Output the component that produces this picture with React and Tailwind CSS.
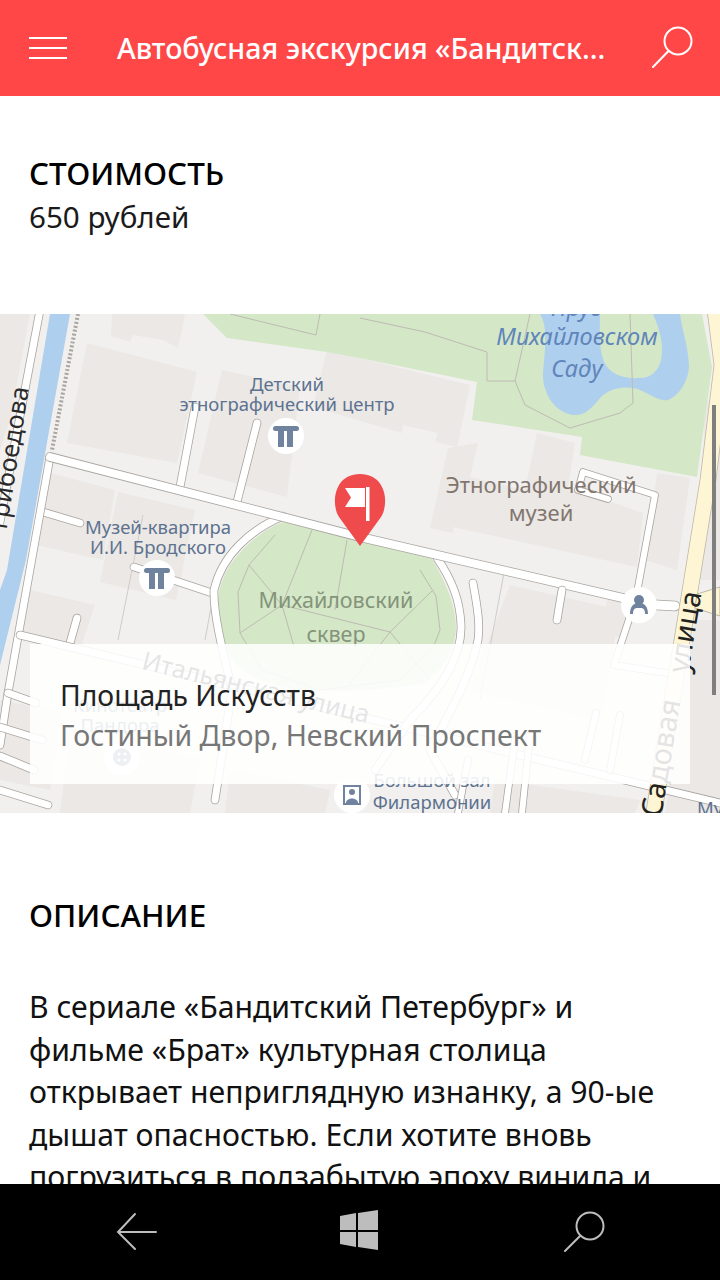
import React from "react";

const FONT = { fontFamily: '"Noto Sans", "Open Sans", sans-serif' };

// casing + white fill, same look as the map tiles
function Road({ d, w = 7, fill = "#ffffff", casing = "#aaa5a0", cap = "round" }) {
  return (
    <g fill="none" strokeLinejoin="round" strokeLinecap={cap}>
      <path d={d} stroke={casing} strokeWidth={w + 1.6} />
      <path d={d} stroke={fill} strokeWidth={w} />
    </g>
  );
}

const BUILDINGS = [
  "87,343 197,372 177,463 67,443",
  "112,314 185,314 178,348 163,340 133,335 130,342 111,336",
  "222,370 300,387 287,497 198,473",
  "327,350 470,385 457,447 435,442 438,433 403,425 402,433 313,407",
  "537,433 575,443 568,487 643,513 637,567 453,527 453,533 430,528 448,448 478,443 470,477 525,490",
  "657,473 690,478 677,570 645,560",
  "50,473 115,490 103,560 36,545",
  "118,492 195,510 176,600 100,582",
  "30,590 95,605 80,650 22,632",
  "0,314 30,314 10,420 0,450",
  "510,585 620,610 600,720 470,690",
  "610,590 640,600 625,640 600,630",
  "0,700 60,712 50,790 0,780",
  "70,730 200,760 190,813 60,813",
  "230,770 330,790 325,813 225,813",
  "495,780 640,800 635,813 490,813",
  "695,620 720,620 720,813 665,813",
  "705,400 720,405 720,580 700,580",
];

function MapIconCircle({ cx, cy, children }) {
  return (
    <g>
      <circle cx={cx} cy={cy} r="18" fill="#ffffff" />
      {children}
    </g>
  );
}

function Column({ cx, cy }) {
  return (
    <g fill="#6f829e">
      <rect x={cx - 13} y={cy - 10} width="26" height="5" rx="2.5" />
      <rect x={cx - 8} y={cy - 6} width="6" height="17" />
      <rect x={cx + 1} y={cy - 6} width="6" height="17" />
    </g>
  );
}

function MapDrawing() {
  const label = { fontFamily: '"Noto Sans", sans-serif' };
  return (
    <svg viewBox="0 314 720 499" className="block h-[499px] w-[720px]">
      <rect x="0" y="314" width="720" height="499" fill="#f1f0ee" />
      {BUILDINGS.map((p) => (
        <polygon key={p} points={p} fill="#ebe8e5" />
      ))}

      {/* parks and water */}
      <polygon
        points="203,314 227,338 327,352 360,358 477,382 472,420 582,437 580,455 697,477 712,367 702,314"
        fill="#d4e7c7"
      />
      <path
        d="M540,314 C550,330 543,360 543,377 C544,395 555,412 573,415 C585,416 592,408 600,398 C610,388 625,385 640,390 C652,395 660,402 668,400 C680,395 689,380 689,365 C688,345 682,330 680,314 L653,314 C660,330 664,345 661,360 C658,372 650,378 640,378 C625,379 610,375 604,362 C598,345 600,330 600,314 Z"
        fill="#afcfee"
      />
      <polygon points="50,314 70,314 26,560 0,665 0,590 7,570" fill="#afcfee" />
      <path
        d="M283,522 L360,541 L430,556 C445,580 456,605 456,628 C455,650 445,668 425,682 C400,690 340,692 300,690 C260,685 232,670 222,640 C214,615 215,590 230,565 C245,545 262,530 283,522 Z"
        fill="#d4e7c7"
      />

      {/* paths inside the parks */}
      <g fill="none" stroke="#bdbcb2" strokeWidth="1">
        <path d="M230,314 L316,335 L320,314" />
        <path d="M360,318 L425,332 L487,352 L487,381 L515,381 M530,314 L515,381 L525,405 L570,428 L620,413 L633,403 L630,314" />
        <path d="M275,535 L249,565 L238,592 L240,633 L262,670 L320,690 L400,680 L433,648 L440,630 L436,596 L420,570" />
        <path d="M249,565 L282,605 L240,633 M282,605 L312,530 M282,605 L295,650 M282,605 L390,632 L433,590 M390,632 L345,690 M347,540 L335,610 M390,632 L430,680" />
      </g>
      <g fill="none" stroke="#cfcdca" strokeWidth="1">
        <path d="M218,570 L205,640 M143,515 L118,640" />
        <path d="M504,573 L480,700" />
      </g>

      {/* rail along the canal */}
      <path d="M78,314 L52,450" stroke="#aaa5a0" strokeWidth="4" strokeDasharray="2 2" fill="none" />

      {/* streets */}
      <Road d="M40,310 L0,522" w={7} />
      <Road d="M195,407 L180,487" w={7} />
      <Road d="M257,423 L237,502" w={7} />
      <Road d="M43,512 L80,523" w={7} />
      <Road d="M134,567 L212,593" w={7} />
      <Road d="M77,618 L70,643" w={7} />
      <Road d="M50,457 L8,693 L0,745" w={7} />
      <Road d="M8,693 L36,703" w={7} />
      <Road d="M0,727 L42,740" w={7} />
      <Road d="M0,756 L34,770" w={7} />
      <Road d="M0,790 L48,805" w={7} />
      <Road d="M20,635 L720,803" w={7} />
      <Road d="M283,516 C250,530 222,555 214,590 C213,615 225,660 232,690 L215,800" w={7} />
      <Road d="M437,558 C452,580 460,600 461,625 C462,650 450,680 410,720 L375,770" w={7} />
      <Road d="M473,583 C478,610 480,625 478,640 C470,680 445,720 430,750 L455,795" w={7} />
      <Road d="M50,457 L360,537 L640,602" w={8} />
      <Road d="M562,590 L557,620" w={7} />
      <Road d="M583,472 L578,490 L608,499 M583,472 L655,495 L636,598 L614,665 L680,675" w={6} />
      <Road d="M596,713 L585,760 M620,715 L610,770 M515,740 L505,813 M468,760 L458,813 M530,735 L522,813" w={6} />
      <Road d="M640,604 L675,606" w={9} />
      <Road
        d="M715,310 L722,365 L708,480 L695,560 L682,640 L657,793 L653,818"
        w={15}
        fill="#fdf5d3"
        casing="#bdb8a8"
        cap="butt"
      />
      <polygon points="697,594 720,587 720,616 695,608" fill="#fdf5d3" stroke="#bdb8a8" strokeWidth="1" />

      {/* labels */}
      <g style={label} fill="#5d7290" fontSize="18.5" textAnchor="middle">
        <text x="287" y="391">Детский</text>
        <text x="287" y="411">этнографический центр</text>
        <text x="158" y="534">Музей-квартира</text>
        <text x="158" y="554">И.И. Бродского</text>
        <text x="120" y="712">Кинотеатр</text>
        <text x="120" y="732">Пандора</text>
        <text x="432" y="787">Большой зал</text>
        <text x="432" y="809">Филармонии</text>
        <text x="697" y="815" textAnchor="start">Му</text>
      </g>
      <g style={label} fill="#82766f" fontSize="22" textAnchor="middle">
        <text x="541" y="493">Этнографический</text>
        <text x="541" y="521">музей</text>
      </g>
      <g style={label} fill="#84947a" fontSize="21.5" textAnchor="middle">
        <text x="336" y="608">Михайловский</text>
        <text x="336" y="642">сквер</text>
      </g>
      <g style={label} fill="#5f85ba" fontSize="23.5" fontStyle="italic" textAnchor="middle">
        <text x="577" y="316">Пруд</text>
        <text x="577" y="345">Михайловском</text>
        <text x="577" y="377">Саду</text>
      </g>
      <text x="0" y="0" style={label} fill="#2a2a2a" fontSize="25" textAnchor="end" transform="translate(29,388) rotate(-81)">
        Грибоедова
      </text>
      <text x="0" y="0" style={label} fill="#2a2a2a" fontSize="25" textAnchor="middle" transform="translate(254,696) rotate(13.5)">
        Итальянская улица
      </text>
      <text x="0" y="0" style={label} fill="#222222" fontSize="29" transform="translate(661,818) rotate(-80.5)">
        Садовая
      </text>
      <text x="0" y="0" style={label} fill="#222222" fontSize="29" transform="translate(688,674) rotate(-80.5)">
        улица
      </text>

      {/* point of interest icons */}
      <MapIconCircle cx={286} cy={436}>
        <Column cx={286} cy={436} />
      </MapIconCircle>
      <MapIconCircle cx={157} cy={578}>
        <Column cx={157} cy={578} />
      </MapIconCircle>
      <MapIconCircle cx={639} cy={605}>
        <circle cx="639" cy="600" r="5" fill="#6f829e" />
        <path d="M630,614 C630,606 634,603 639,603 C644,603 648,606 648,614 L645,614 C645,610 644,609 642,608 L636,608 C634,609 633,610 633,614 Z" fill="#6f829e" />
      </MapIconCircle>
      <MapIconCircle cx={122} cy={757}>
        <circle cx="122" cy="757" r="9" fill="#6f829e" />
        <circle cx="119" cy="754" r="1.5" fill="#fff" />
        <circle cx="125" cy="754" r="1.5" fill="#fff" />
        <circle cx="119" cy="760" r="1.5" fill="#fff" />
        <circle cx="125" cy="760" r="1.5" fill="#fff" />
      </MapIconCircle>
      <MapIconCircle cx={352} cy={795}>
        <rect x="344" y="786" width="16" height="18" fill="none" stroke="#6f829e" strokeWidth="2" />
        <circle cx="352" cy="792" r="3" fill="#6f829e" />
        <path d="M346,803 C346,797 358,797 358,803 Z" fill="#6f829e" />
      </MapIconCircle>

      {/* pin */}
      <path
        d="M360,546 L339,517 C331,505 333,474 360,474 C387,474 389,505 381,517 Z"
        fill="#ef4a4c"
      />
      <polygon points="345,488 365,488 365,507 345,507 351,497.5" fill="#ffffff" />
      <rect x="366" y="487" width="3.5" height="34" fill="#ffffff" />
    </svg>
  );
}

function SearchIcon({ className, color }) {
  return (
    <svg viewBox="0 0 42 42" className={className} fill="none" stroke={color} strokeWidth="2" strokeLinecap="round">
      <circle cx="27" cy="15" r="13.5" />
      <path d="M17.5 25 L2 41" />
    </svg>
  );
}

export default function App() {
  return (
    <div style={FONT} className="relative flex h-[1280px] w-[720px] flex-col overflow-hidden bg-white text-black">
      <header className="flex h-[96px] shrink-0 items-center bg-[#ff4747] pl-[29px] pr-[27px] text-white">
        <div className="flex w-[38px] flex-col gap-[8px]">
          <span className="h-[2px] bg-white" />
          <span className="h-[2px] bg-white" />
          <span className="h-[2px] bg-white" />
        </div>
        <h1 className="ml-[50px] flex-1 text-[28.6px] font-medium leading-[36px]">
          Автобусная экскурсия «Бандитск...
        </h1>
        <SearchIcon className="h-[42px] w-[42px] -translate-y-[1px]" color="#ffffff" />
      </header>

      <main className="flex-1 overflow-hidden">
        <section className="pl-[29px] pt-[56px]">
          <h2 className="text-[31.4px] font-medium leading-[42px]">СТОИМОСТЬ</h2>
          <p className="text-[29.6px] leading-[46px] text-[#1a1a1a]">650 рублей</p>
        </section>

        <section className="relative mt-[74px] h-[499px]">
          <MapDrawing />
          <div className="absolute left-[30px] top-[330px] flex h-[140px] w-[660px] flex-col justify-center bg-white/[0.88] pl-[30px] pt-[2px]">
            <p className="text-[28.3px] leading-[40px] text-[#222222]">Площадь Искусств</p>
            <p className="text-[28.5px] leading-[40px] text-[#777777]">Гостиный Двор, Невский Проспект</p>
          </div>
          <div className="absolute left-[712px] top-[91px] h-[290px] w-[4px] bg-[#7f7f7f]" />
        </section>

        <section className="px-[29px] pt-[81px]">
          <h2 className="text-[31.4px] font-medium leading-[42px]">ОПИСАНИЕ</h2>
          <p className="mt-[50px] w-[640px] text-[30.2px] leading-[42.6px] text-[#111111]">
            В сериале «Бандитский Петербург» и фильме «Брат» культурная столица
            открывает неприглядную изнанку, а 90-ые дышат опасностью. Если хотите
            вновь погрузиться в подзабытую эпоху винила и
          </p>
        </section>
      </main>

      <nav className="relative flex h-[96px] shrink-0 items-center bg-black">
        <svg viewBox="0 0 720 96" className="h-[96px] w-[720px]" fill="none" stroke="#bdbdbd" strokeWidth="2" strokeLinecap="round">
          <path d="M156 48 H118 M135 30 L118 48 L135 65" />
          <g fill="#bdbdbd" stroke="none">
            <polygon points="340,32 356,29 356,46 340,46" />
            <polygon points="358,29 378,26 378,46 358,46" />
            <polygon points="340,48 356,48 356,63 340,60" />
            <polygon points="358,48 378,48 378,66 358,63" />
          </g>
          <circle cx="590" cy="42" r="13.5" />
          <path d="M580 52 L565 67" />
        </svg>
      </nav>
    </div>
  );
}
